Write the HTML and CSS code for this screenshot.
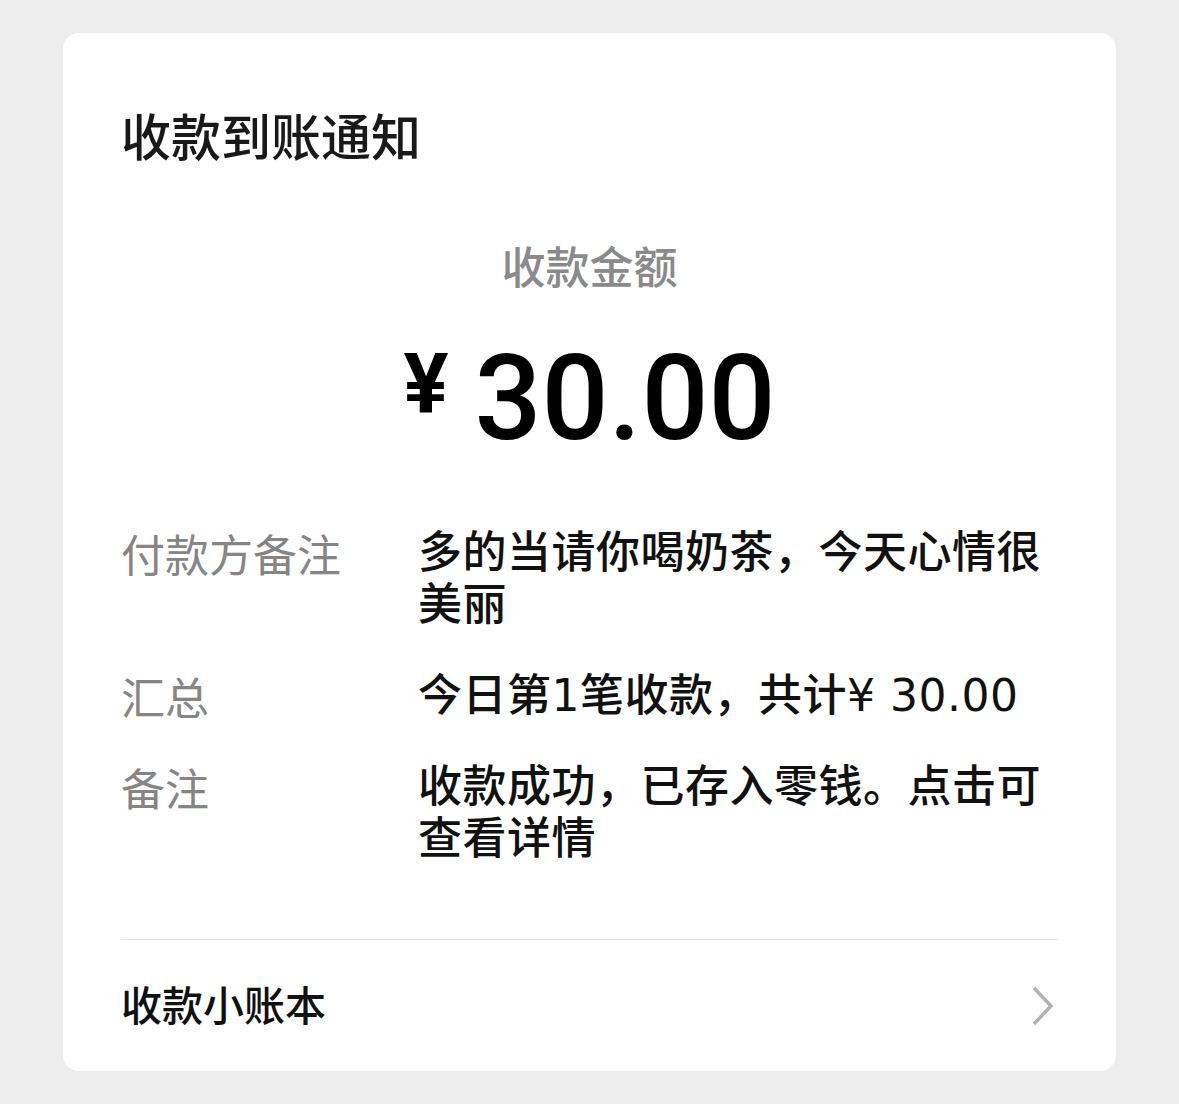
FILE: index.html
```html
<!DOCTYPE html>
<html lang="zh-CN">
<head>
<meta charset="utf-8">
<title>收款到账通知</title>
<link rel="stylesheet" href="styles.css">
</head>
<body>
<div class="card">
  <div class="title">收款到账通知</div>
  <div class="subtitle">收款金额</div>
  <div class="amount"><span class="yen">¥</span><span class="num">30.00</span></div>
  <div class="info">
    <div class="label">付款方备注</div>
    <div class="value">多的当请你喝奶茶，今天心情很美丽</div>
    <div class="label">汇总</div>
    <div class="value">今日第1笔收款，共计¥ 30.00</div>
    <div class="label">备注</div>
    <div class="value">收款成功，已存入零钱。点击可查看详情</div>
  </div>
  <div class="divider"></div>
  <div class="footer">
    <div class="footer-text">收款小账本</div>
    <svg class="chevron" width="24" height="40" viewBox="0 0 24 40"><polyline points="4,2 21,20 4,38" fill="none" stroke="#b2b2b2" stroke-width="3.5"/></svg>
  </div>
</div>
</body>
</html>
```
FILE: styles.css
```css
html, body {
  margin: 0;
  padding: 0;
}
body {
  background: #ededed;
  padding: 33px 63px;
  font-family: "Noto Sans CJK SC", "Noto Sans", sans-serif;
}
.card {
  background: #fff;
  border-radius: 16px;
  width: 1053px;
  height: 1038px;
  box-sizing: border-box;
  padding: 66px 58px 0;
  display: flex;
  flex-direction: column;
}
.title {
  font-size: 50px;
  line-height: 70px;
  font-weight: 500;
  color: #191919;
}
.subtitle {
  margin-top: 70px;
  text-align: center;
  font-size: 44px;
  line-height: 52px;
  font-weight: 500;
  color: #8a8a8a;
}
.amount {
  margin-top: 49px;
  display: flex;
  justify-content: center;
  align-items: flex-start;
  font-family: Roboto, "Liberation Sans", sans-serif;
  color: #000;
}
.yen {
  font-size: 84px;
  line-height: 84px;
  font-weight: 700;
  margin-top: 3px;
  margin-right: 26px;
}
.num {
  font-size: 118px;
  line-height: 118px;
  font-weight: 500;
}
.info {
  margin-top: 69px;
  display: grid;
  grid-template-columns: 297px 1fr;
  row-gap: 39px;
  font-size: 44px;
  line-height: 52px;
}
.label {
  color: #858585;
}
.value {
  color: #111;
  font-weight: 500;
  font-family: "DejaVu Sans", "Noto Sans CJK SC", sans-serif;
  letter-spacing: 0.5px;
}
.divider {
  margin-top: 74px;
  height: 1px;
  background: #e5e5e5;
}
.footer {
  height: 131px;
  display: flex;
  align-items: center;
  justify-content: space-between;
}
.footer-text {
  font-size: 41px;
  line-height: 52px;
  font-weight: 500;
  color: #111;
  margin-top: -5px;
}
.chevron {
  margin-right: 4px;
}
```
